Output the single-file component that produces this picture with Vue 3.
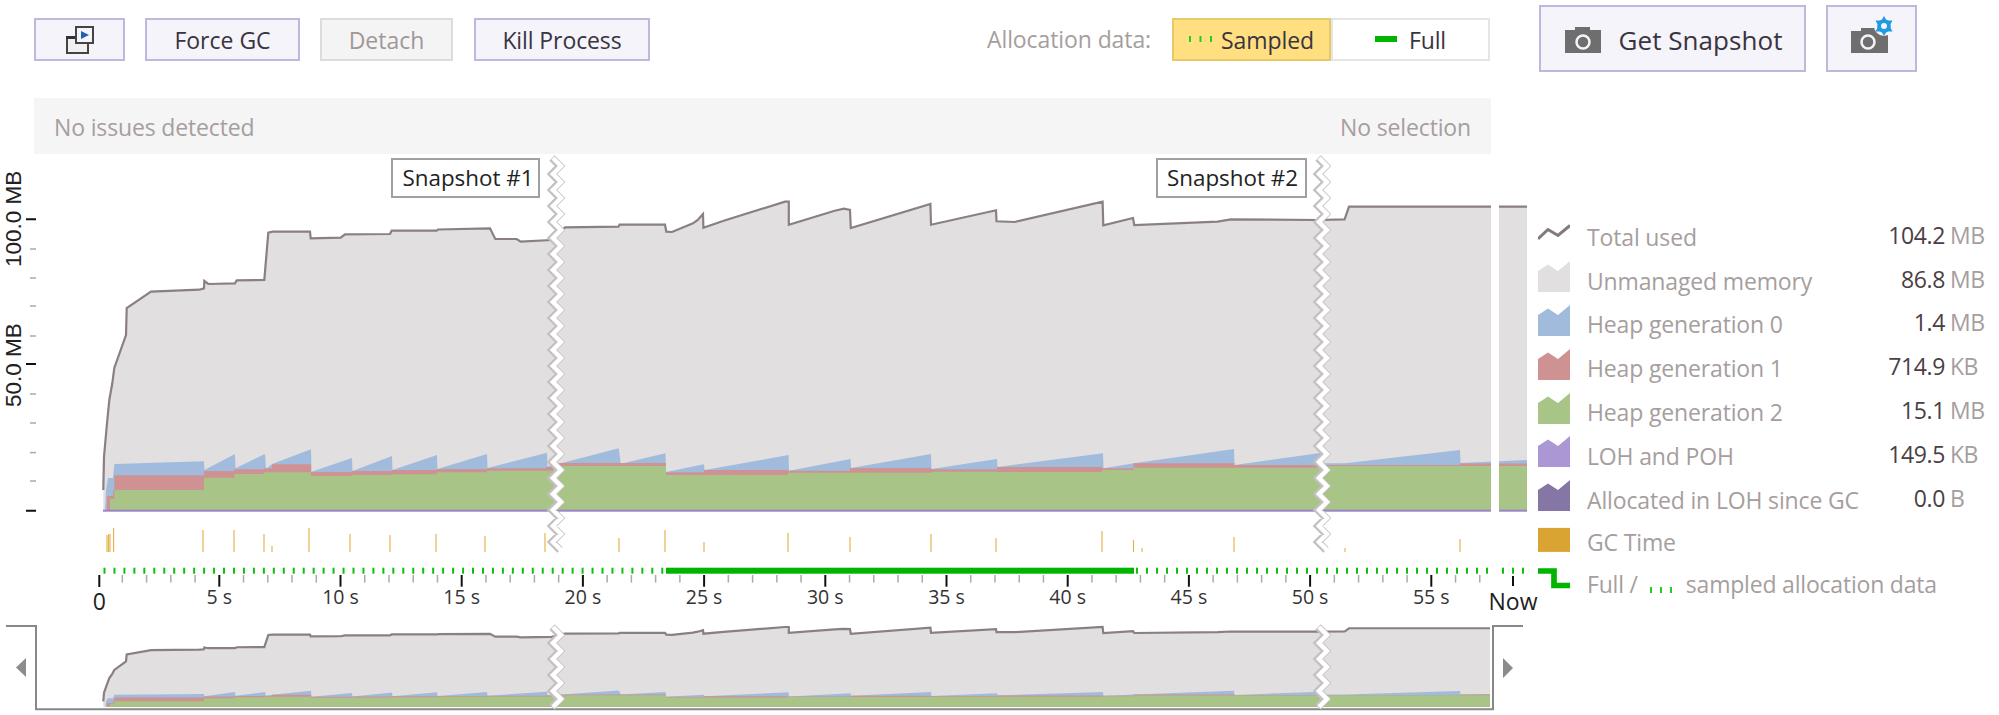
<script setup>
const BASE = 510.7
const OV_BASE = 706.7
const OV_K = 0.258

const total = [[103.3,510.7],[103.3,490],[104,456.7],[106.7,426.7],[109.3,400],[112.3,383.3],[114.3,368],[126,335],[126.7,308],[151,291.7],[199.3,289.7],[204,288.3],[204.3,281],[208.3,284],[235,283.3],[236.7,280.3],[264.3,280],[268.3,232.7],[272.7,231.7],[310,231.7],[310.7,238.3],[340.7,237.7],[345,234.3],[390,234],[391.7,230.7],[436.7,230.7],[438,229.5],[490,228.3],[495.3,239],[516.7,239],[520.7,241.7],[551.5,240],[565,227.3],[618.5,226.7],[619.6,224.7],[665,224.7],[666.3,231.7],[672,232],[693,223.3],[697.7,220],[703,214],[703.4,227.7],[723.7,220.7],[785,201.7],[788.8,201.7],[788.8,224.7],[834.7,210.7],[844,208.7],[850,210],[850.8,228],[930.4,204],[931,224.7],[996,210.3],[996.5,221.3],[1014.6,222],[1102.6,201.7],[1103.3,225.3],[1133,218],[1134.3,225],[1217.6,221.7],[1231,219.3],[1318,220],[1344.6,219.3],[1349,206.7],[1527,206.7]]

const blue = [[105,BASE],[106,490],[108,478],[113,478],[114.3,464],[204,461.3],[204.5,470],[235,454],[235.5,468.3],[265,454],[266,469],[272,464],[311,449.3],[311.5,471.7],[352,458],[352.5,471],[392,456],[392.5,470],[437,455],[437.5,469],[487,454],[487.5,468],[547,452.7],[547.5,467],[553,463],[562,463],[618.7,448.3],[620.8,463.7],[665.5,453.3],[666,472],[704,464.3],[704.5,470],[788.6,455],[789,470.7],[850.6,459],[851,468],[931,454],[931.5,469],[997,459],[997.5,467],[1103,453.3],[1103.5,468.3],[1134,463.3],[1234,449],[1234.5,465],[1322,452.7],[1323,463.3],[1345,463.3],[1460,450],[1460.5,463],[1527,460]]

const redSteps = [[107,496],[113,490],[114.3,475.3],[204,471],[234,469.3],[264,468.3],[272,464.3],[311,472],[352,471],[392,470],[437,469],[487,468.3],[546,467],[553,463],[666,472.3],[704,470],[788,470.7],[850,468],[931,469.3],[997,467],[1102,468.3],[1133.5,463.3],[1234.5,465],[1460,463.5]]
const greenSteps = [[110,499],[114.3,490],[204,477.7],[234.3,474],[264.3,472.3],[311,476],[351.7,475],[391.7,474.3],[436.7,472.3],[486.7,470.7],[553,466],[666,475],[788,472.7],[931.5,471.7],[997,472],[1102,470],[1133.5,467.7],[1320,466]]

function stepped(list) {
  const out = [[list[0][0], BASE]]
  list.forEach(([x, y], i) => {
    out.push([x, y])
    const next = list[i + 1] ? list[i + 1][0] : 1527
    out.push([next, y])
  })
  return out
}
const toStr = pts => pts.map(p => p.join(',')).join(' ')
const closed = (pts, base) => [...pts, [1527, base]]

function layersFor(map, base) {
  const m = pts => pts.map(([x, y]) => [x, map(y)])
  return [
    { key: 'u', fill: '#e2dfe0', points: toStr(closed(m(total), base)) },
    { key: 'b', fill: '#a1bbdd', points: toStr(closed(m(blue), base)) },
    { key: 'r', fill: '#ce9292', points: toStr(closed(m(stepped(redSteps)), base)) },
    { key: 'g', fill: '#a8c487', points: toStr(closed(m(stepped(greenSteps)), base)) }
  ]
}
const mainLayers = layersFor(y => y, BASE)
const ovMap = y => OV_BASE - (BASE - y) * OV_K
const ovLayers = layersFor(ovMap, OV_BASE)
const mainLine = toStr(total.slice(1))
const ovLine = toStr(total.slice(1).map(([x, y]) => [x, ovMap(y)]))

const minorY = [249, 278, 306, 336, 394, 423, 452.6, 481]
const gc = [[107,535],[108.6,534.3],[110,534],[113.6,528],[203,530],[234,530],[264,534],[272,546],[309,528],[350,534],[390,535],[436,534],[485,536],[545,533],[619,538],[665,530],[704,542],[788,533],[850,537],[931,534],[996,538],[1102,531],[1133.5,540],[1142,548],[1234,537],[1345,548],[1460,539]]

const dots = []
for (let x = 103.5; x < 664; x += 9.96) dots.push(x)
for (let x = 1136; x <= 1487; x += 10) dots.push(x)
dots.push(1502, 1512, 1522)

const tx = t => 219.3 + (t - 5) * 24.24
const majors = []
const minors = []
for (let t = 1; t <= 57; t++) (t % 5 === 0 ? majors : minors).push(t)

function zig(cx, y0, y1) {
  const out = []
  let i = 0
  for (let y = y0; y <= y1; y += 8) { out.push([cx + (i % 2 ? 4 : -4), y]); i++ }
  return toStr(out)
}
const breaks = [557, 1323].flatMap(cx => [
  { key: cx + 'm', points: zig(cx, 158, 555) },
  { key: cx + 'o', points: zig(cx, 627, 707) }
])
const shift = p => p.split(' ').map(s => { const [x, y] = s.split(','); return (x - 1) + ',' + y }).join(' ')
const breakShadow = breaks.map(b => ({ key: b.key, points: shift(b.points) }))

const legend = [
  { label: 'Total used', icon: 'line', value: '104.2', unit: 'MB' },
  { label: 'Unmanaged memory', fill: '#e2dfe0', value: '86.8', unit: 'MB' },
  { label: 'Heap generation 0', fill: '#a1bbdd', value: '1.4', unit: 'MB' },
  { label: 'Heap generation 1', fill: '#ce9292', value: '714.9', unit: 'KB' },
  { label: 'Heap generation 2', fill: '#a8c487', value: '15.1', unit: 'MB' },
  { label: 'LOH and POH', fill: '#ab97d4', value: '149.5', unit: 'KB' },
  { label: 'Allocated in LOH since GC', fill: '#8576a6', value: '0.0', unit: 'B' }
]
const hexagram = '10,0 12.6,4.5 18.5,4.5 15.5,10 18.5,15.5 12.6,15.5 10,20 7.4,15.5 1.5,15.5 4.5,10 1.5,4.5 7.4,4.5'
</script>

<template>
  <div class="page">
    <header class="toolbar">
      <div class="main-tools">
        <div class="btn-group">
          <button class="btn btn-icon">
            <svg width="30" height="28" viewBox="0 0 30 28">
              <path d="M2 11V27H23V17" fill="#f0f0f0" stroke="#444" stroke-width="2" />
              <rect x="1" y="10" width="9" height="3" fill="#333" />
              <rect x="11" y="1" width="17" height="16" fill="#f4f4fa" stroke="#444" stroke-width="2" />
              <path d="M16 5L24 9L16 13Z" fill="#1c62b0" />
            </svg>
          </button>
          <button class="btn btn-force">Force GC</button>
          <button class="btn btn-detach">Detach</button>
          <button class="btn btn-kill">Kill Process</button>
        </div>
        <div class="alloc">
          <span class="alloc-label">Allocation data:</span>
          <div class="toggle">
            <div class="toggle-item active">
              <svg width="24" height="6" viewBox="0 0 24 6">
                <path d="M1 0V6M11.5 0V6M22 0V6" stroke="#24cc24" stroke-width="2" />
              </svg>
              <span>Sampled</span>
            </div>
            <div class="toggle-item">
              <span class="dash"></span>
              <span>Full</span>
            </div>
          </div>
        </div>
      </div>
      <div class="snap-tools">
        <button class="btn-big btn-snap">
          <svg class="cam" width="36" height="26" viewBox="0 0 36 26">
            <path d="M0 3H10V0H25V3H36V26H0Z" fill="#6e6e6e" />
            <circle cx="18" cy="15" r="6.5" fill="#6e6e6e" stroke="#f4f4fa" stroke-width="2.5" />
          </svg>
          <span>Get Snapshot</span>
        </button>
        <button class="btn-big btn-snap-gear">
          <svg width="46" height="38" viewBox="0 0 46 38">
            <path d="M0 15H10V12H25V15H37V37H0Z" fill="#6e6e6e" />
            <circle cx="17" cy="26" r="6.5" fill="#6e6e6e" stroke="#f4f4fa" stroke-width="2.5" />
            <g transform="translate(23 0)">
              <circle cx="10" cy="10" r="10" fill="#f4f4fa" />
              <polygon :points="hexagram" fill="#1f9ce0" />
              <circle cx="10" cy="10" r="6.8" fill="#1f9ce0" />
              <circle cx="10" cy="10" r="3" fill="#f4f4fa" />
            </g>
          </svg>
        </button>
      </div>
    </header>

    <div class="status">
      <span>No issues detected</span>
      <span>No selection</span>
    </div>

    <div class="chart-row">
      <svg class="chart" width="1538" height="561" viewBox="0 154 1538 561">
        <defs>
          <clipPath id="clip-main"><rect x="100" y="154" width="1427" height="360" /></clipPath>
          <clipPath id="clip-ov"><rect x="100" y="620" width="1390" height="90" /></clipPath>
        </defs>

        <text class="axis-label" transform="translate(20.5 267) rotate(-90)">100.0 MB</text>
        <text class="axis-label" transform="translate(20.5 407) rotate(-90)">50.0 MB</text>
        <path d="M26 219.3H36M26 364H36M26 510.7H36" stroke="#111" stroke-width="2" />
        <path v-for="y in minorY" :key="y" :d="`M30 ${y}H36`" stroke="#aaa" stroke-width="1.5" />

        <g clip-path="url(#clip-main)">
          <polygon v-for="l in mainLayers" :key="l.key" :points="l.points" :fill="l.fill" />
          <polyline :points="mainLine" fill="none" stroke="#8a7f82" stroke-width="2.2" />
          <rect x="103" y="509.7" width="1424" height="2" fill="#9b85c8" />
          <rect x="1491" y="154" width="8" height="360" fill="#fff" />
        </g>

        <path v-for="g in gc" :key="g[0]" :d="`M${g[0]} ${g[1]}V552`" stroke="#e3ae45" stroke-width="1.1" />

        <rect v-for="x in dots" :key="x" :x="x" y="567.7" width="2" height="6" fill="#0cc00c" />
        <rect x="666" y="567.7" width="468" height="6" fill="#00b400" />

        <path v-for="t in minors" :key="t" :d="`M${tx(t)} 575V582.6`" stroke="#aaa" stroke-width="1.5" />
        <path v-for="t in majors" :key="t" :d="`M${tx(t)} 575V586.7`" stroke="#111" stroke-width="2" />
        <path d="M99.3 575V587M1513 576V586" stroke="#111" stroke-width="2" />
        <text v-for="t in majors" :key="t" class="time" :x="tx(t)" y="604.3">{{ t }} s</text>
        <text class="time big" x="99.3" y="610">0</text>
        <text class="time big" x="1513" y="610">Now</text>

        <g clip-path="url(#clip-ov)">
          <polygon v-for="l in ovLayers" :key="l.key" :points="l.points" :fill="l.fill" />
          <polyline :points="ovLine" fill="none" stroke="#8a7f82" stroke-width="2.2" />
        </g>
        <path d="M6 626H36V709.3H1493V626H1523" fill="none" stroke="#888" stroke-width="2" />
        <path d="M26 658V677L16 667.5ZM1503 658V678L1513 668Z" fill="#8c8c8c" />

        <polyline v-for="b in breakShadow" :key="b.key" :points="b.points" fill="none" stroke="#c5c1c2" stroke-width="7.5" />
        <polyline v-for="b in breaks" :key="b.key" :points="b.points" fill="none" stroke="#fff" stroke-width="4.5" />

        <g class="snap-label">
          <rect x="392" y="159" width="147" height="38" />
          <text x="468" y="186">Snapshot #1</text>
          <rect x="1157" y="159" width="149" height="38" />
          <text x="1232.5" y="186">Snapshot #2</text>
        </g>
      </svg>

      <aside class="legend">
        <div v-for="row in legend" :key="row.label" class="legend-row">
          <svg class="legend-icon" width="32" height="32" viewBox="0 0 32 32">
            <polyline v-if="row.icon === 'line'" points="0,20.8 10,11.5 20,17.5 32,7.5" fill="none" stroke="#85797d" stroke-width="3" />
            <polygon v-else points="0,10 10,3.5 20,10 32,0 32,31 0,31" :fill="row.fill" />
          </svg>
          <span class="legend-label">{{ row.label }}</span>
          <span class="legend-value">{{ row.value }}</span>
          <span class="legend-unit">{{ row.unit }}</span>
        </div>
        <div class="legend-row short">
          <svg class="legend-icon" width="32" height="32" viewBox="0 0 32 32">
            <rect x="0" y="3.9" width="32" height="24" fill="#d9a431" />
          </svg>
          <span class="legend-label">GC Time</span>
        </div>
        <div class="legend-row short">
          <svg class="legend-icon" width="32" height="32" viewBox="0 0 32 32">
            <path d="M0 5H16V19.5H32" fill="none" stroke="#00b400" stroke-width="5.7" />
          </svg>
          <span class="legend-label full-label">
            <span>Full /</span>
            <svg class="mini-dots" width="22" height="6" viewBox="0 0 22 6">
              <path d="M1 0V6M11 0V6M21 0V6" stroke="#24cc24" stroke-width="2" />
            </svg>
            <span>sampled allocation data</span>
          </span>
        </div>
      </aside>
    </div>
  </div>
</template>

<style scoped>
.page {
  width: 1999px;
  height: 715px;
  overflow: hidden;
  background: #fff;
  font-family: "Open Sans", "Noto Sans", sans-serif;
  font-size: 23px;
  color: #3a3340;
  box-sizing: border-box;
  padding-top: 5px;
}
.toolbar {
  display: flex;
  height: 93px;
  padding-left: 34px;
}
.main-tools {
  display: flex;
  justify-content: space-between;
  width: 1456px;
  padding-top: 12.5px;
  align-items: flex-start;
}
.btn-group {
  display: flex;
  gap: 20px;
}
button {
  font: inherit;
  color: inherit;
  box-sizing: border-box;
  display: flex;
  align-items: center;
  justify-content: center;
  padding: 2px 0 0;
  background: #f4f4fa;
  border: 2px solid #bdb8de;
}
.btn {
  height: 43px;
}
.btn-icon { width: 91px; padding: 0; }
.btn-icon svg { margin-left: 1px; margin-top: 1px; }
.btn-force { width: 155px; }
.btn-detach {
  width: 133px;
  margin-right: 1px;
  color: #a09898;
  background: #f4f4f4;
  border-color: #dcdcdc;
}
.btn-kill { width: 176px; letter-spacing: -0.1px; }
.alloc {
  display: flex;
  align-items: center;
  gap: 21px;
}
.alloc-label {
  color: #a69e9e;
  letter-spacing: -0.1px;
}
.toggle {
  display: flex;
}
.toggle-item {
  box-sizing: border-box;
  width: 159px;
  height: 43px;
  padding-top: 2px;
  display: flex;
  align-items: center;
  justify-content: center;
  gap: 12px;
  background: #fff;
  border: 2px solid #e5e5e5;
  letter-spacing: -0.1px;
}
.toggle-item.active {
  background: #ffdf80;
  border-color: #e8c96a;
  gap: 8px;
}
.dash {
  width: 22px;
  height: 6px;
  margin-bottom: 2px;
  background: #00b400;
}
.toggle-item.active svg {
  margin-bottom: 2px;
}
.snap-tools {
  display: flex;
  gap: 20px;
  margin-left: 49px;
}
.btn-big {
  height: 67px;
}
.btn-snap {
  width: 267px;
  gap: 18px;
  font-size: 26px;
  letter-spacing: 0.05px;
}
.cam {
  margin-left: 2px;
  margin-top: 1px;
}
.btn-snap-gear {
  width: 91px;
  padding: 0 0 7px 5px;
}
.status {
  margin-left: 34px;
  width: 1456.5px;
  height: 56px;
  box-sizing: border-box;
  padding: 2px 19.5px 0 20px;
  display: flex;
  justify-content: space-between;
  align-items: center;
  background: #f5f5f5;
  color: #a69e9e;
  letter-spacing: -0.15px;
}
.chart-row {
  display: flex;
  height: 561px;
}
.chart {
  display: block;
  flex: none;
}
.axis-label {
  font-family: "Liberation Sans", sans-serif;
  font-size: 22.5px;
  fill: #222;
}
.time {
  font-size: 19.5px;
  fill: #333;
  text-anchor: middle;
}
.time.big {
  font-size: 23px;
  fill: #222;
}
.snap-label rect {
  fill: #fff;
  stroke: #a0a0a0;
  stroke-width: 2;
}
.snap-label text {
  font-size: 22.4px;
  fill: #222;
  text-anchor: middle;
}
.legend {
  display: flex;
  flex-direction: column;
  padding-top: 61px;
}
.legend-row {
  display: flex;
  align-items: center;
  height: 43.8px;
}
.legend-row.short {
  height: 41.6px;
}
.legend-icon {
  flex: none;
  align-self: flex-start;
  margin-top: 2.5px;
  margin-right: 17px;
}
.legend-label {
  width: 296px;
  flex: none;
  color: #a69e9e;
  white-space: nowrap;
  letter-spacing: -0.15px;
}
.full-label {
  display: flex;
  align-items: center;
  width: auto;
  gap: 12px;
  letter-spacing: -0.2px;
}
.mini-dots {
  flex: none;
  margin-top: 12px;
  margin-right: 2px;
}
.legend-value {
  width: 62px;
  flex: none;
  margin-bottom: 4px;
  text-align: right;
  color: #4a4044;
  letter-spacing: -0.4px;
}
.legend-unit {
  margin-left: 5px;
  margin-bottom: 4px;
  color: #a69e9e;
  letter-spacing: -0.5px;
}
</style>
